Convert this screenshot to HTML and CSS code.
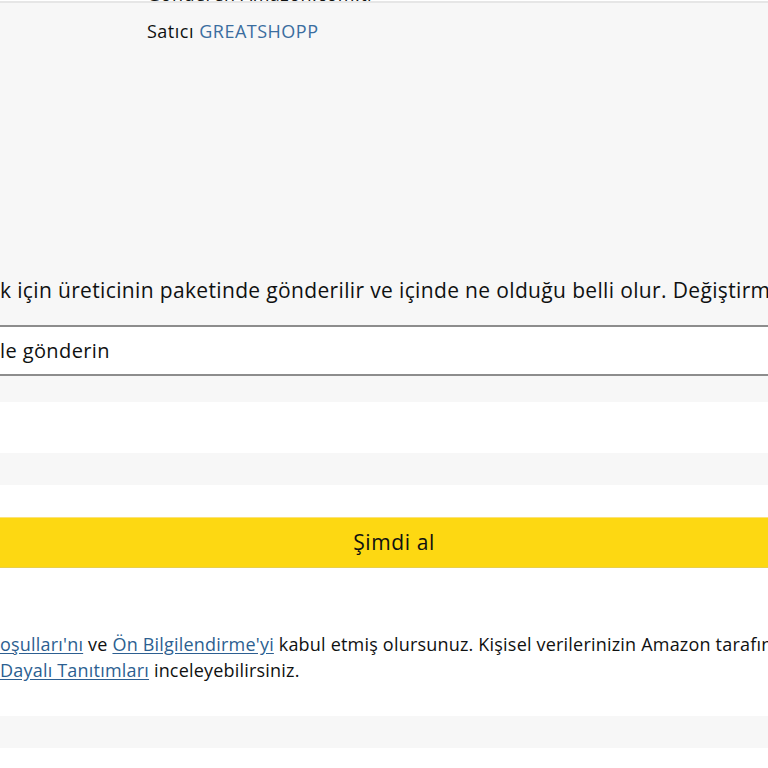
FILE: index.html
```html
<!DOCTYPE html>
<html lang="tr">
<head>
<meta charset="utf-8">
<link rel="stylesheet" href="styles.css">
</head>
<body>
<div class="page">
  <section class="summary">
    <div class="seller">
      <p class="sender">Gönderen Amazon.com.tr</p>
      <p class="sold">Satıcı <a href="#" class="shop">GREATSHOPP</a></p>
    </div>
    <p class="pkg">k için üreticinin paketinde gönderilir ve içinde ne olduğu belli olur. Değiştirmek için</p>
    <div class="option">le gönderin</div>
  </section>
  <div class="blank"></div>
  <div class="band"></div>
  <div class="blank small"></div>
  <button class="buy" type="button">Şimdi al</button>
  <p class="legal">
    <a href="#" class="lnk">oşulları'nı</a> ve <a href="#" class="lnk">Ön Bilgilendirme'yi</a> kabul etmiş olursunuz. Kişisel verilerinizin Amazon tarafından<br>
    <a href="#" class="lnk">Dayalı Tanıtımları</a> inceleyebilirsiniz.
  </p>
  <div class="band last"></div>
</div>
</body>
</html>
```

FILE: styles.css
```css
* { box-sizing: border-box; }
html, body { margin: 0; padding: 0; background: #ffffff; }
body {
  width: 768px;
  height: 768px;
  overflow: hidden;
  font-family: "Open Sans", "Noto Sans", sans-serif;
  color: #0f1111;
}
.page { width: 768px; overflow: hidden; }

.summary {
  background: #f7f7f7;
  height: 401px;
  border-top: 2px solid #e6e6e6;
  margin-top: 1px;
  display: flex;
  flex-direction: column;
}
.seller {
  padding-left: 147px;
}
.seller p { margin: 0; white-space: nowrap; letter-spacing: 0.5px; }
.sender {
  font-size: 18px;
  line-height: 20px;
  margin-top: -19px !important;
  color: #0f1111;
}
.sold {
  font-size: 18px;
  line-height: 24px;
  margin-top: 15px !important;
}
.shop { color: #3a6d9f; text-decoration: none; }

.pkg {
  margin: 233px 0 0 0;
  font-size: 21px;
  line-height: 28px;
  white-space: nowrap;
  letter-spacing: 0.35px;
}
.option {
  margin-top: 21px;
  height: 51px;
  background: #ffffff;
  border-top: 2px solid #8d8d8d;
  border-bottom: 2px solid #8d8d8d;
  font-size: 20px;
  line-height: 47px;
  letter-spacing: 0.4px;
  white-space: nowrap;
}

.blank { height: 51px; background: #ffffff; }
.blank.small { height: 32px; }
.band { height: 32px; background: #f7f7f7; }

.buy {
  display: block;
  width: 100%;
  height: 51px;
  margin: 0;
  border: 0;
  border-top: 1px solid #fbe27a;
  border-bottom: 1px solid #e8cf4a;
  background: #fdd812;
  font-family: inherit;
  font-size: 21px;
  letter-spacing: 0.6px;
  color: #0f1111;
  text-align: center;
  padding: 0 0 2px 20px;
}

.legal {
  margin: 63px 0 0 0;
  font-size: 18px;
  line-height: 26px;
  white-space: nowrap;
  letter-spacing: 0.2px;
  height: 85px;
}
.lnk { color: #2d5f91; text-decoration: underline; text-underline-offset: 2px; }
.band.last { height: 32px; }
```
